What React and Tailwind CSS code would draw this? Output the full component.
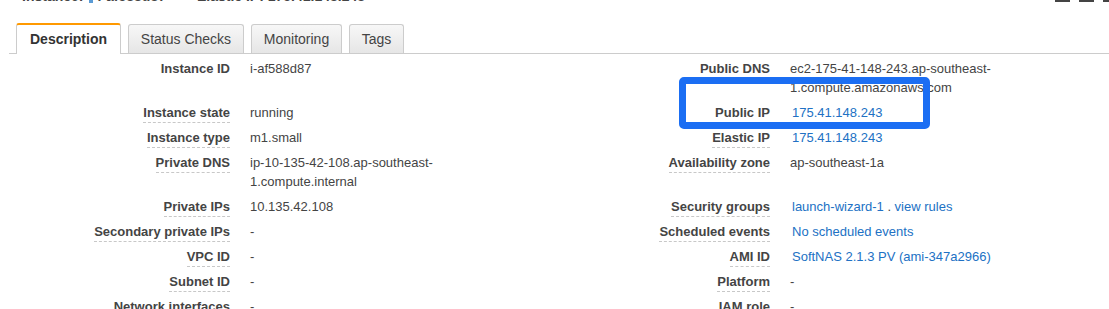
import React from 'react';

const LINK = 'text-[#2171c4] ml-[2px]';

const rows = [
  { l: 'Instance ID', ld: false, lv: ['i-af588d87'], r: 'Public DNS', rd: false, rv: ['ec2-175-41-148-243.ap-southeast-', '1.compute.amazonaws.com'] },
  { l: 'Instance state', ld: true, lv: ['running'], r: 'Public IP', rd: false, rv: <span className={LINK}>175.41.148.243</span> },
  { l: 'Instance type', ld: true, lv: ['m1.small'], r: 'Elastic IP', rd: true, rv: <span className={LINK}>175.41.148.243</span> },
  { l: 'Private DNS', ld: true, lv: ['ip-10-135-42-108.ap-southeast-', '1.compute.internal'], r: 'Availability zone', rd: true, rv: ['ap-southeast-1a'] },
  {
    l: 'Private IPs', ld: true, lv: ['10.135.42.108'], r: 'Security groups', rd: true,
    rv: (
      <span className="ml-[2px]">
        <span className="text-[#2171c4]">launch-wizard-1</span>
        <span> . </span>
        <span className="text-[#2171c4]">view rules</span>
      </span>
    ),
  },
  { l: 'Secondary private IPs', ld: true, lv: ['-'], r: 'Scheduled events', rd: true, rv: <span className={LINK}>No scheduled events</span> },
  { l: 'VPC ID', ld: true, lv: ['-'], r: 'AMI ID', rd: true, rv: <span className={LINK}>SoftNAS 2.1.3 PV (ami-347a2966)</span> },
  { l: 'Subnet ID', ld: true, lv: ['-'], r: 'Platform', rd: true, rv: ['-'] },
  { l: 'Network interfaces', ld: true, lv: ['-'], r: 'IAM role', rd: true, rv: ['-'] },
];

function Label({ text, dashed }) {
  return (
    <div className="text-right pr-5 py-[3px] font-bold">
      <span className={dashed ? 'pb-[2px] border-b border-dashed border-[#c8c8c8]' : ''}>{text}</span>
    </div>
  );
}

function Value({ v }) {
  return (
    <div className="py-[3px]">
      {Array.isArray(v)
        ? v.map((line, i) => <div key={i}>{line}</div>)
        : v}
    </div>
  );
}

function Tab({ label, active, width }) {
  if (active) {
    return (
      <div className={`${width} h-[31px] -mb-px bg-white border border-[#cccccc] border-b-0 border-t-2 border-t-[#ff9900] rounded-t-[3px] flex items-center justify-center font-bold text-[#333] text-[14px]`}>
        {label}
      </div>
    );
  }
  return (
    <div className={`${width} h-[29px] bg-linear-to-b from-[#f7f7f7] to-[#e6e6e6] border border-[#cccccc] border-b-0 rounded-t-[3px] flex items-center justify-center text-[#444] text-[14px]`}>
      {label}
    </div>
  );
}

export default function App() {
  return (
    <div className="relative w-[1109px] h-[309px] overflow-hidden bg-white text-[#444] text-[13px] leading-[19px] font-['Liberation_Sans',Arial,sans-serif]">
      {/* cut-off header line */}
      <div className="h-[5px] overflow-hidden flex">
        <div className="flex items-start -mt-[12px] leading-[16px] text-[14px] font-bold text-[#444]">
          <span className="ml-[22px]">Instance:</span>
          <span className="mt-[12px] ml-[6px] w-[4px] h-[3px] bg-[#5b9bd5]" />
          <span className="ml-[4px]">i-af588d87</span>
          <span className="ml-[31px]">Elastic IP: 175.41.148.243</span>
        </div>
        <div className="ml-auto flex gap-[9px]">
          <div className="w-[15px] h-[2px] bg-[#444]" />
          <div className="w-[15px] h-[2px] bg-[#444]" />
          <div className="w-[6px] h-[2px] bg-[#444]" />
        </div>
      </div>

      {/* tabs */}
      <div className="mt-[18px] ml-[9px] pl-[7px] flex items-end gap-[7px] border-b border-[#cccccc]">
        <Tab label="Description" active width="w-[105px]" />
        <Tab label="Status Checks" width="w-[116px]" />
        <Tab label="Monitoring" width="w-[91px]" />
        <Tab label="Tags" width="w-[55px]" />
      </div>

      {/* details */}
      <div className="pt-[2px] grid grid-cols-[250px_290px_250px_1fr]">
        {rows.map((row) => (
          <React.Fragment key={row.l}>
            <Label text={row.l} dashed={row.ld} />
            <Value v={row.lv} />
            <Label text={row.r} dashed={row.rd} />
            <Value v={row.rv} />
          </React.Fragment>
        ))}
      </div>

      {/* highlight annotation */}
      <div className="absolute left-[679px] top-[77px] w-[251px] h-[52px] border-[7px] border-[#1b6ef3] rounded-[5px]" />
    </div>
  );
}
